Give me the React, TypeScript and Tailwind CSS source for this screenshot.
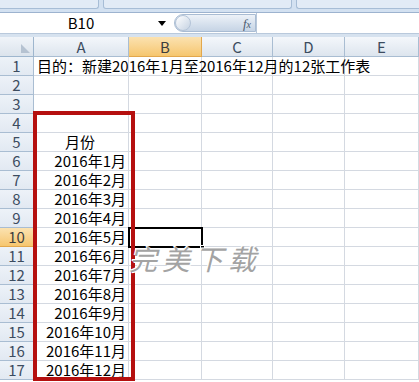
import React from 'react';

const cols = ['A', 'B', 'C', 'D', 'E'];
const colWidths = ['w-[95px]', 'w-[73px]', 'w-[71px]', 'w-[72px]', 'w-[74px]'];

const cellA: Record<number, { text: string; align: string }> = {
  5: { text: '月份', align: 'justify-center' },
};
for (let m = 1; m <= 12; m++) {
  cellA[m + 5] = { text: `2016年${m}月`, align: 'justify-end' };
}

const font = { fontFamily: '"Noto Sans CJK SC", "Noto Sans", sans-serif' };

const App: React.FC = () => {
  const rows = Array.from({ length: 17 }, (_, i) => i + 1);

  return (
    <div className="w-[419px] h-[382px] overflow-hidden bg-white relative" style={font}>
      {/* ribbon bottom edge */}
      <div className="h-[12px] bg-[#d3e1f1] flex gap-[4px] overflow-hidden">
        <div className="w-[101px] h-[9px] -ml-[2px] bg-[#e2ebf6] border border-t-0 border-[#a7bdd6] rounded-b-[3px]" />
        <div className="w-[189px] h-[9px] bg-[#e2ebf6] border border-t-0 border-[#a7bdd6] rounded-b-[3px]" />
        <div className="flex-1 h-[9px] bg-[#e2ebf6] border border-t-0 border-r-0 border-[#a7bdd6] rounded-bl-[3px]" />
      </div>

      {/* formula bar */}
      <div className="h-[21px] border-t border-[#9db3cf] bg-white flex items-center">
        <div className="w-[174px] h-full flex items-center">
          <span className="flex-1 text-center text-[15px] text-black leading-[20px] pl-[4px]">B10</span>
          <span className="w-0 h-0 border-l-[4px] border-r-[4px] border-t-[5px] border-l-transparent border-r-transparent border-t-black mr-[8px]" />
        </div>
        <div className="w-[82px] h-[18px] rounded-l-full bg-gradient-to-b from-[#edf2f8] to-[#c6d4e5] border border-[#a9bcd3] flex items-center justify-between pr-[4px]">
          <span className="w-[16px] h-[16px] rounded-full bg-gradient-to-br from-white to-[#c5d2e2] border border-[#b4c4d8]" />
          <span className="text-[13px] italic text-[#4a5a6e] leading-none" style={{ fontFamily: '"Liberation Serif", serif' }}>
            f<span className="text-[10px]">x</span>
          </span>
        </div>
        <div className="flex-1 h-full bg-white border-l border-[#b7c7da]" />
      </div>

      <div className="h-[4px] bg-[#d6e2ef] border-t border-[#b9c9dc]" />

      {/* sheet */}
      <div className="flex flex-col text-[15px]">
        <div className="flex h-[20px]">
          <div className="w-[34px] h-full bg-gradient-to-b from-[#f0f4f9] to-[#dbe3ec] border-r border-b border-[#9eb6ce] flex items-end justify-end p-[3px]">
            <span className="w-0 h-0 border-l-[9px] border-t-[9px] border-l-transparent border-t-[#b5c2d1] rotate-180" />
          </div>
          {cols.map((c, i) => (
            <div
              key={c}
              className={`${colWidths[i]} h-full flex items-center justify-center border-r border-b leading-[19px] text-[15px] ${
                c === 'B'
                  ? 'bg-gradient-to-b from-[#fbe2b0] to-[#f6c66e] border-[#e2a74c] text-[#3d3d3d]'
                  : 'bg-gradient-to-b from-[#f4f7fb] to-[#dde5ee] border-[#a9bdd2] text-[#3c4c5f]'
              }`}
            >
              {c}
            </div>
          ))}
        </div>

        {rows.map(r => (
          <div key={r} className="flex h-[19px]">
            <div
              className={`w-[34px] h-full flex items-center justify-center border-r border-b leading-[18px] text-[15px] ${
                r === 10
                  ? 'bg-gradient-to-b from-[#fbe2b0] to-[#f6c66e] border-[#e2a74c] text-[#3d3d3d]'
                  : 'bg-gradient-to-b from-[#edf2f8] to-[#e2e9f2] border-[#a9bdd2] text-[#3c4c5f]'
              }`}
            >
              {r}
            </div>
            {cols.map((c, i) => (
              <div
                key={c}
                className={`${colWidths[i]} h-full border-r border-b border-[#d4d9e1] flex items-center text-black leading-[18px] whitespace-nowrap ${
                  c === 'A' && cellA[r] ? cellA[r].align : ''
                } ${c === 'A' ? 'pr-[2px] overflow-visible' : 'overflow-hidden'} ${c === 'A' && r === 1 ? 'pl-[3px]' : ''}`}
              >
                {c === 'A' && r === 1 && <span className="relative z-10">目的：新建2016年1月至2016年12月的12张工作表</span>}
                {c === 'A' && cellA[r] && <span>{cellA[r].text}</span>}
              </div>
            ))}
          </div>
        ))}
      </div>

      {/* active cell B10 */}
      <div className="absolute left-[128px] top-[227px] w-[75px] h-[21px] border-2 border-black">
        <span className="absolute -right-[4px] -bottom-[4px] w-[5px] h-[5px] bg-black border border-white" />
      </div>

      {/* red annotation box */}
      <div className="absolute left-[33px] top-[111px] w-[102px] h-[270px] border-[4px] border-[#b5100f]" />

      {/* watermark */}
      <div
        className="absolute left-[129px] top-[244px] text-[28px] tracking-[5px] text-[#a3a3a3] italic leading-none"
        style={{ textShadow: '1px 1px 0 #fff, -1px -1px 0 #fff' }}
      >
        完美下载
      </div>
    </div>
  );
};

export default App;
